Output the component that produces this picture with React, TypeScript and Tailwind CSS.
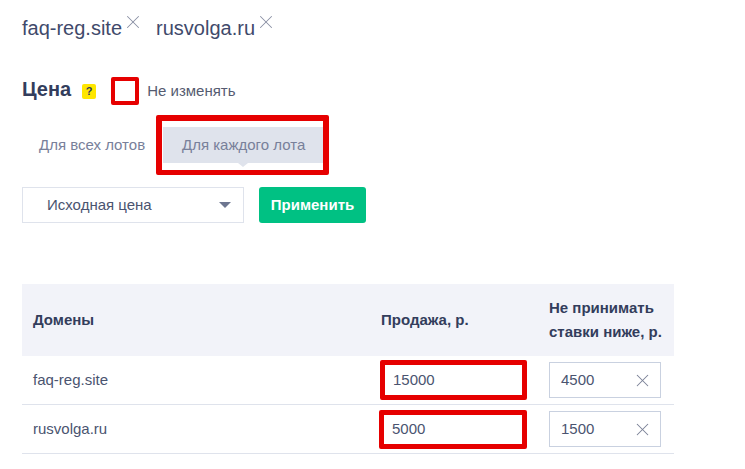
import { X } from 'lucide-react';

const rows = [
  { domain: 'faq-reg.site', price: '15000', min: '4500', priceBox: 'ml-[10px] w-[147px] h-[40px] mt-[4px]' },
  { domain: 'rusvolga.ru', price: '5000', min: '1500', priceBox: 'ml-[9px] w-[148px] h-[39px] mt-[5px]' },
];

function Tag({ name }: { name: string }) {
  return (
    <div className="flex items-start">
      <span className="text-[20px] leading-[28px] text-[#3f4a6b]">{name}</span>
      <X className="mt-[-3px] text-[#8a90a3]" size={22} strokeWidth={1.1} />
    </div>
  );
}

export default function App() {
  return (
    <div className="h-[469px] w-[745px] overflow-hidden bg-white pl-[22px] pt-[14px] font-['Liberation_Sans',Arial,sans-serif] text-[#3f4a6b]">
      <div className="flex gap-[12px]">
        <Tag name="faq-reg.site" />
        <Tag name="rusvolga.ru" />
      </div>

      {/* Price heading */}
      <div className="mt-[35px] flex items-center">
        <span className="mt-[-5px] text-[20px] font-bold leading-[28px] text-[#333d5c]">Цена</span>
        <span className="ml-[11px] flex h-[15px] w-[14px] items-center justify-center rounded-[2px] bg-[#ffe600] text-[11px] font-bold text-[#333d5c]">?</span>
        <span className="ml-[15px] h-[28px] w-[28px] rounded-[2px] border-[4px] border-[#e60000] bg-white" />
        <span className="ml-[8px] mt-[1px] text-[15px] text-[#555b70]">Не изменять</span>
      </div>

      {/* Tabs */}
      <div className="mt-[10px] flex items-center">
        <span className="ml-[17px] text-[15px] text-[#78809a]">Для всех лотов</span>
        <div className="ml-[11px] h-[60px] w-[173px] rounded-[2px] border-[6px] border-b-[5px] border-[#e60000] bg-white pl-[1px] pt-[6px]">
          <div className="relative flex h-[36px] w-[160px] items-center justify-center bg-[#dfe3ec] pl-[1px] text-[15px] text-[#78809a]">
            Для каждого лота
            <span className="absolute bottom-[-4px] left-[75px] h-0 w-0 border-x-[5px] border-t-[4px] border-x-transparent border-t-[#dfe3ec]" />
          </div>
        </div>
      </div>

      {/* Preset */}
      <div className="mt-[12px] flex gap-[15px]">
        <div className="flex h-[36px] w-[222px] items-center justify-between border border-[#dfe3ec] pl-[24px] pr-[12px] text-[15px] text-[#4a5470]">
          Исходная цена
          <span className="h-0 w-0 border-x-[6px] border-t-[6px] border-x-transparent border-t-[#6d7690]" />
        </div>
        <button className="h-[36px] w-[107px] rounded-[3px] bg-[#00c183] text-[15px] font-bold text-white">Применить</button>
      </div>

      {/* Table */}
      <div className="mt-[61px] w-[652px]">
        <div className="grid h-[72px] grid-cols-[348px_168px_136px] items-center bg-[#f2f3f9] text-[15px] font-bold text-[#333d5c]">
          <span className="pl-[11px]">Домены</span>
          <span className="pl-[11px]">Продажа, р.</span>
          <span className="pl-[11px] leading-[24px]">Не принимать<br />ставки ниже, р.</span>
        </div>
        {rows.map((row) => (
          <div key={row.domain} className="grid h-[49px] grid-cols-[348px_168px_136px] border-b border-[#dfe3ec]">
            <span className="pl-[11px] pt-[15px] text-[15px] leading-[18px] text-[#4a5470]">{row.domain}</span>
            <div className={`flex items-center rounded-[2px] border-[5px] border-[#e60000] pl-[8px] text-[15px] text-[#4a5470] ${row.priceBox}`}>{row.price}</div>
            <div className="ml-[11px] mt-[6px] flex h-[36px] w-[112px] items-center justify-between border border-[#c9d1e0] pl-[11px] pr-[7px] text-[15px] text-[#4a5470]">
              {row.min}
              <X className="text-[#7a8196]" size={21} strokeWidth={1.2} />
            </div>
          </div>
        ))}
      </div>
    </div>
  );
}
